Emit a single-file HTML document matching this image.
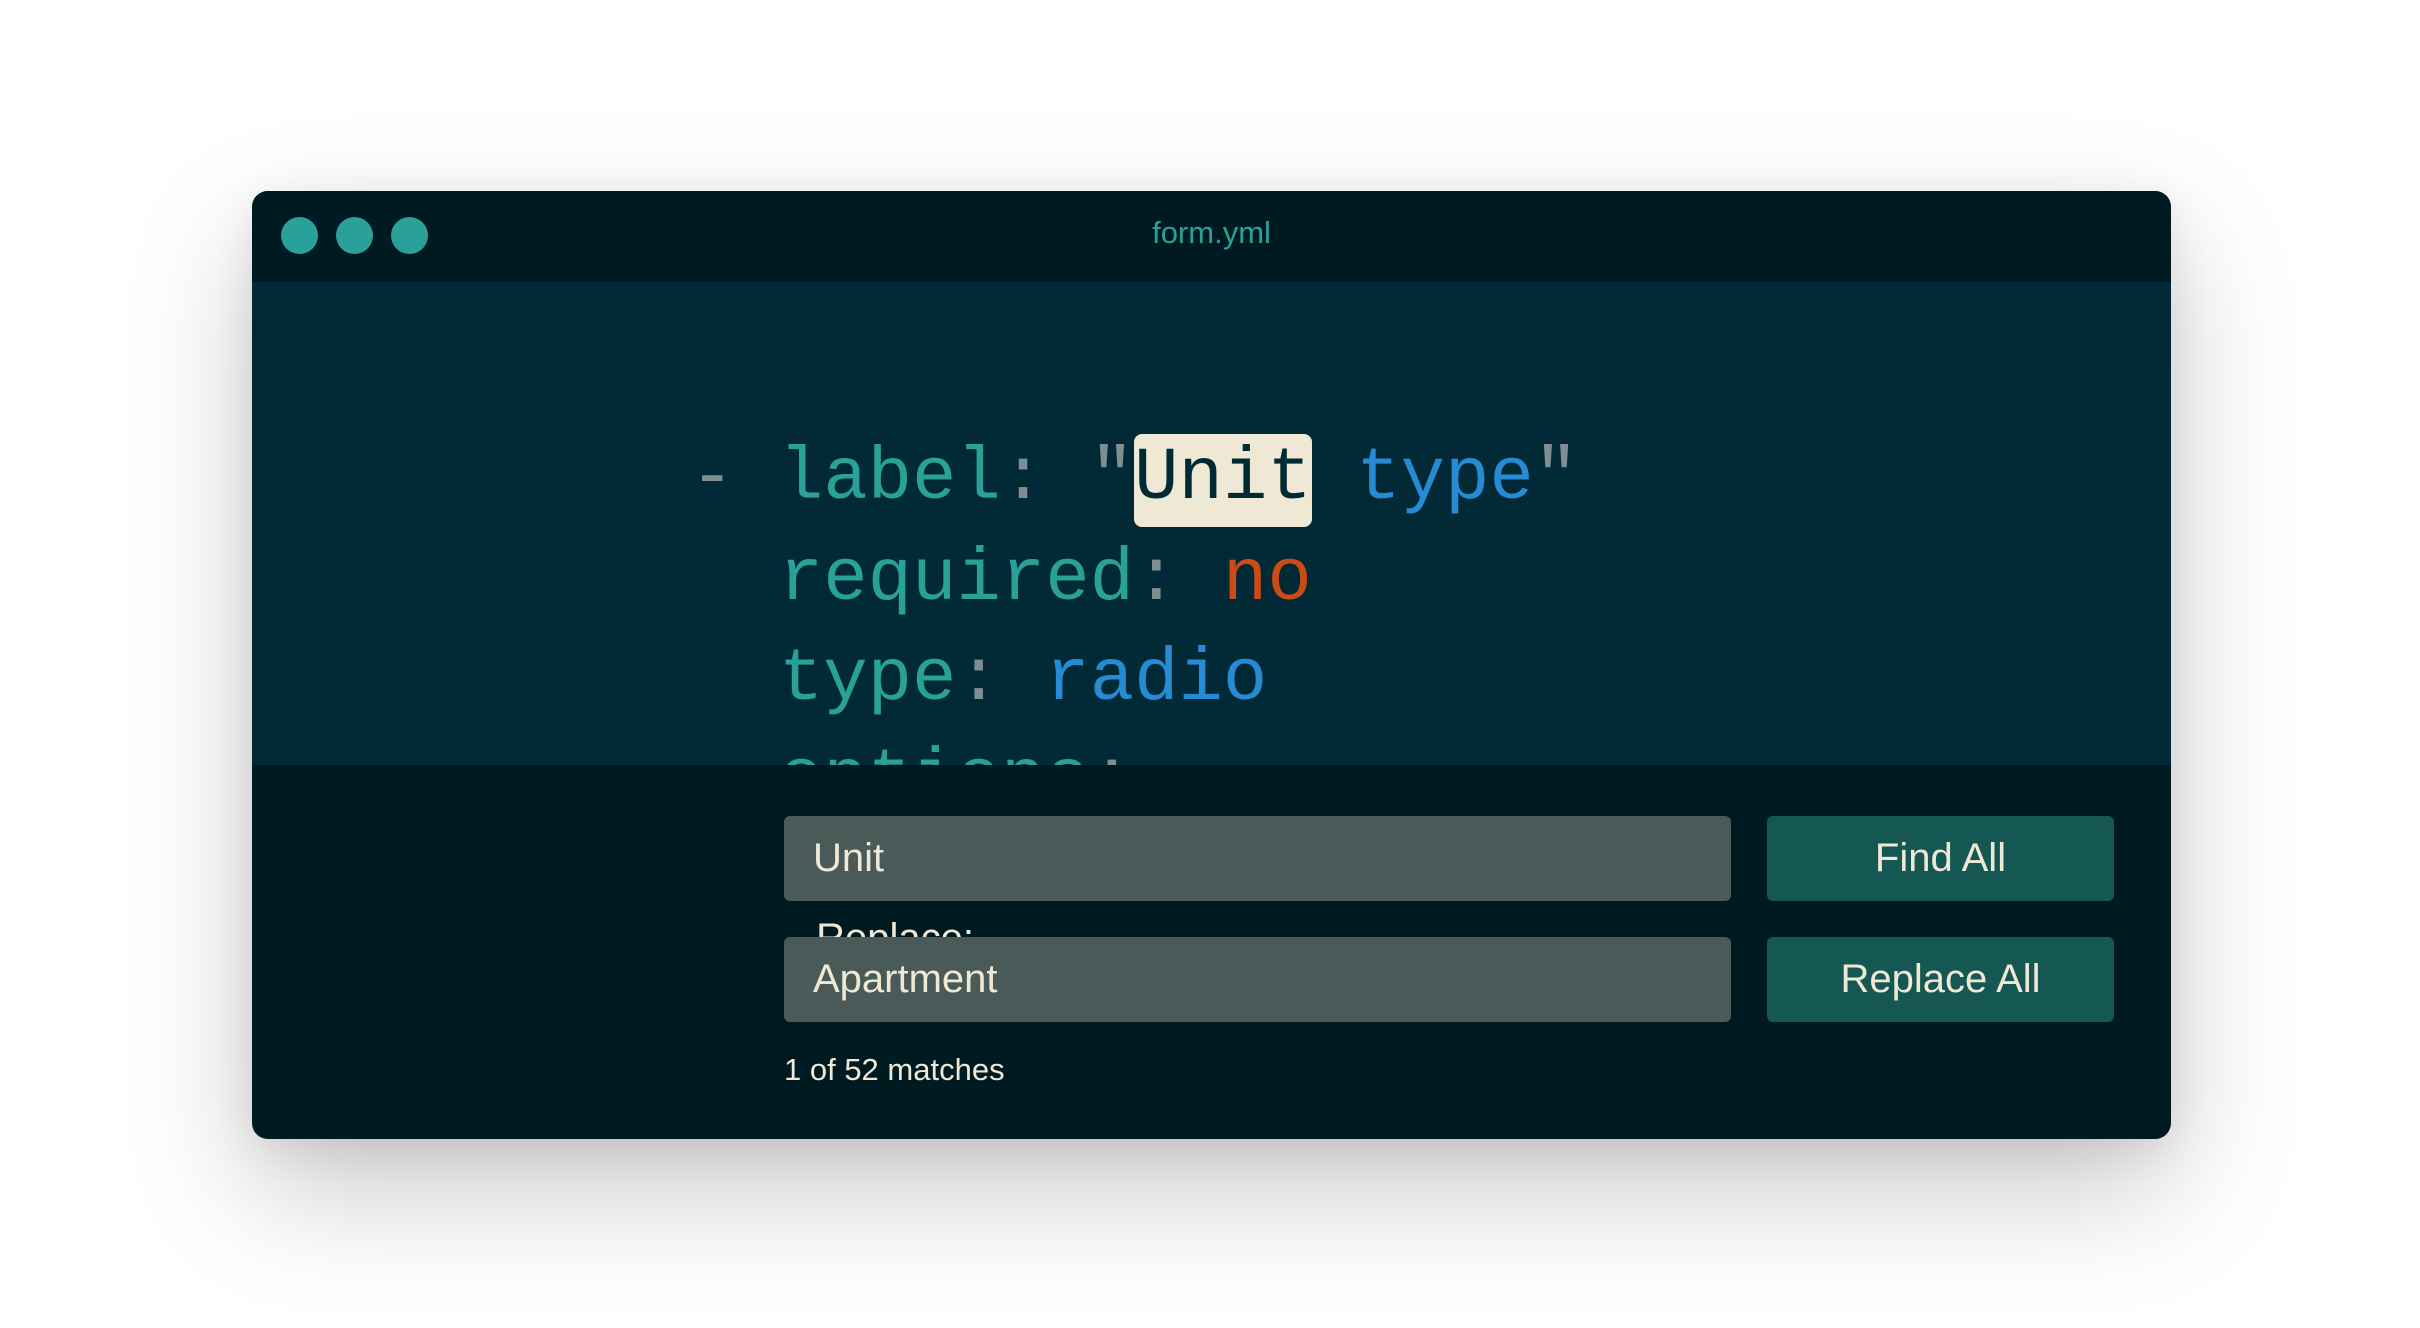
<!DOCTYPE html>
<html><head><meta charset="utf-8"><style>
html,body{margin:0;padding:0;background:#fff;width:2420px;height:1328px;overflow:hidden;}
.win{position:absolute;left:252px;top:191px;width:1919px;height:948px;border-radius:16px;overflow:hidden;background:#001a21;box-shadow:0 50px 130px rgba(0,0,0,0.22),0 10px 40px rgba(0,0,0,0.08);}
.title{position:absolute;left:0;top:0;width:100%;height:91px;background:#001a21;}
.dot{position:absolute;top:26px;width:37px;height:37px;border-radius:50%;background:#2aa198;}
.tt{position:absolute;left:0;width:100%;top:24px;text-align:center;font:31px "Liberation Sans",sans-serif;color:#2aa198;}
.code{position:absolute;left:0;top:91px;width:100%;height:483px;background:#012a36;overflow:hidden;}
.ln{position:absolute;left:438px;font:74px/100px "Liberation Mono",monospace;white-space:pre;color:#2aa198;}
.g{color:#7f8f91}.b{color:#268bd2}.o{color:#cb4b16}
.hl{background:#eee8d5;color:#002b36;border-radius:8px;padding:3px 0 6px;}
.lab{position:absolute;right:1197px;font:40px "Liberation Sans",sans-serif;color:#eee8d5;}
.inp{position:absolute;left:532px;width:947px;height:85px;background:#4a5a58;border-radius:6px;font:40px/85px "Liberation Sans",sans-serif;color:#eee8d5;padding-left:29px;box-sizing:border-box;}
.btn{position:absolute;left:1515px;width:347px;height:85px;background:#155752;border-radius:6px;font:40px/85px "Liberation Sans",sans-serif;color:#eee8d5;text-align:center;}
</style></head><body>
<div class="win">
 <div class="title">
  <div class="dot" style="left:29px"></div>
  <div class="dot" style="left:84px"></div>
  <div class="dot" style="left:139px"></div>
  <div class="tt">form.yml</div>
 </div>
 <div class="code">
  <div class="ln" style="top:147px"><span class="g">-</span> label<span class="g">:</span> <span class="g">"</span><span class="hl">Unit</span> <span class="b">type</span><span class="g">"</span></div>
  <div class="ln" style="top:248px">  required<span class="g">:</span> <span class="o">no</span></div>
  <div class="ln" style="top:348px">  type<span class="g">:</span> <span class="b">radio</span></div>
  <div class="ln" style="top:448px">  options<span class="g">:</span></div>
 </div>
 <div class="lab" style="top:646px">Find:</div>
 <div class="inp" style="top:625px">Unit</div>
 <div class="btn" style="top:625px">Find All</div>
 <div class="lab" style="top:725px">Replace:</div>
 <div class="inp" style="top:746px;top:746px">Apartment</div>
 <div class="btn" style="top:746px">Replace All</div>
 <div style="position:absolute;left:532px;top:861px;font:31px 'Liberation Sans',sans-serif;color:#eee8d5;">1 of 52 matches</div>
</div>
</body></html>
